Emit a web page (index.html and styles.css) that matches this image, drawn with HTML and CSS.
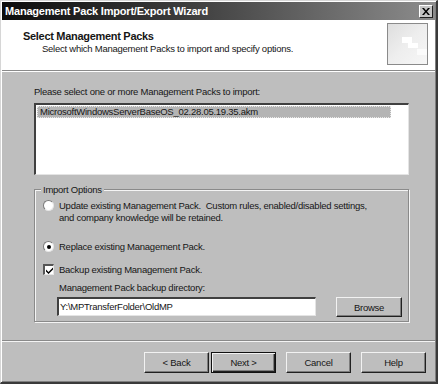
FILE: index.html
```html
<!DOCTYPE html>
<html lang="en">
<head>
  <meta charset="UTF-8">
  <title>Management Pack Import/Export Wizard</title>
  <link rel="stylesheet" href="styles.css">
</head>
<body>
  <div class="dialog">
    <div class="titlebar">
      <span class="title">Management Pack Import/Export Wizard</span>
      <span class="close">
        <svg width="8" height="7" viewBox="0 0 8 7"><path d="M0 0h2l2 2.5L6 0h2L5 3.5 8 7H6L4 4.5 2 7H0l3-3.5z" fill="#000"/></svg>
      </span>
    </div>

    <div class="banner">
      <div class="banner-text">
        <div class="banner-title">Select Management Packs</div>
        <div class="banner-sub">Select which Management Packs to import and specify options.</div>
      </div>
      <div class="banner-icon">
        <span class="tile t1"></span>
        <span class="tile t2"></span>
        <span class="tile t3"></span>
      </div>
    </div>

    <div class="content">
      <div class="prompt">Please select one or more Management Packs to import:</div>
      <div class="listbox">
        <div class="item selected">MicrosoftWindowsServerBaseOS_02.28.05.19.35.akm</div>
      </div>

      <fieldset class="group">
        <legend>Import Options</legend>
        <div class="option">
          <span class="radio"></span>
          <span>Update existing Management Pack.&nbsp; Custom rules, enabled/disabled settings,<br>and company knowledge will be retained.</span>
        </div>
        <div class="option spaced">
          <span class="radio checked"></span>
          <span>Replace existing Management Pack.</span>
        </div>
        <div class="option">
          <span class="check">
            <svg width="7" height="7" viewBox="0 0 7 7"><path d="M0 2.5l2.5 2.5L7 0.5V2.5L2.5 7 0 4.5z" fill="#000"/></svg>
          </span>
          <span>Backup existing Management Pack.</span>
        </div>
        <div class="dir-label">Management Pack backup directory:</div>
        <div class="dir-row">
          <div class="textbox">Y:\MPTransferFolder\OldMP</div>
          <button class="btn browse">Browse</button>
        </div>
      </fieldset>
    </div>

    <div class="footer">
      <button class="btn">&lt; Back</button>
      <button class="btn default">Next &gt;</button>
      <button class="btn gap">Cancel</button>
      <button class="btn gap">Help</button>
    </div>
  </div>
</body>
</html>
```

FILE: styles.css
```css
body {
  margin: 0;
  padding: 0;
  background: #bebebe;
  font-family: "Liberation Sans", Arial, sans-serif;
  font-size: 9.5px;
  letter-spacing: -0.25px;
  color: #161616;
}

.dialog {
  width: 438px;
  height: 384px;
  box-sizing: border-box;
  background: #bebebe;
  border-top: 1px solid #d6d6d6;
  border-left: 1px solid #d6d6d6;
  border-right: 2px solid #3a3a3a;
  border-bottom: 2px solid #3a3a3a;
  box-shadow: inset 1px 1px 0 #fff, inset -1px -1px 0 #808080;
  display: flex;
  flex-direction: column;
  padding: 1px 1px 0 1px;
}

.titlebar {
  height: 18px;
  display: flex;
  align-items: center;
  justify-content: space-between;
  padding: 0 2px 0 3px;
  background: linear-gradient(to right, #0c0c0c 0%, #3a3a3a 40%, #8c8c8c 100%);
}

.title {
  color: #fff;
  font-weight: bold;
  font-size: 11px;
  letter-spacing: -0.2px;
}

.close {
  width: 14px;
  height: 13px;
  box-sizing: border-box;
  background: #c4c4c4;
  border-top: 1px solid #fff;
  border-left: 1px solid #fff;
  border-right: 1px solid #202020;
  border-bottom: 1px solid #202020;
  display: flex;
  align-items: center;
  justify-content: center;
}

.banner {
  height: 47px;
  background: #fff;
  display: flex;
  justify-content: space-between;
  padding: 3px 7px 0 21px;
  border-bottom: 1px solid #8a8a8a;
  box-shadow: 0 1px 0 #fff;
}

.banner-title {
  font-weight: bold;
  font-size: 11px;
  letter-spacing: -0.3px;
  margin-top: 7px;
}

.banner-sub {
  margin-top: 1px;
  padding-left: 19px;
}

.banner-icon {
  width: 41px;
  height: 42px;
  box-sizing: border-box;
  border: 1px solid #8a8a8a;
  background: linear-gradient(135deg, #dedede 0%, #eeeeee 50%, #f6f6f6 100%);
  position: relative;
}

.tile {
  position: absolute;
  background: #fff;
}

.t1 { left: 14px; top: 13px; width: 10px; height: 6px; }
.t2 { left: 20px; top: 19px; width: 10px; height: 5px; }
.t3 { left: 29px; top: 25px; width: 10px; height: 6px; background: #fbfbfb; }

.content {
  padding: 14px 26px 0 32px;
}

.prompt {
  height: 13px;
  line-height: 13px;
}

.listbox {
  margin-top: 5px;
  height: 72px;
  box-sizing: border-box;
  background: #fff;
  border-top: 2px solid #404040;
  border-left: 2px solid #404040;
  border-right: 1px solid #e4e4e4;
  border-bottom: 1px solid #e4e4e4;
  padding: 1px 17px 0 1px;
}

.item {
  height: 12px;
  line-height: 12px;
  padding-left: 3px;
}

.selected {
  background: #b4b4b4;
  outline: 1px dotted #e8e8e8;
  outline-offset: -1px;
}

.group {
  margin: 9px 0 0 0;
  padding: 5px 0 8px 8px;
  height: 138px;
  box-sizing: border-box;
  border: 1px solid #8a8a8a;
  box-shadow: 1px 1px 0 #f4f4f4, inset 1px 1px 0 #f4f4f4;
}

.group legend {
  padding: 0 2px;
  margin-left: -2px;
  background: #bebebe;
}

.option {
  display: flex;
  align-items: flex-start;
  gap: 5px;
  line-height: 12px;
  margin-bottom: 11px;
}

.option.spaced {
  margin-top: 17px;
}

.radio {
  width: 11px;
  height: 11px;
  flex-shrink: 0;
  box-sizing: border-box;
  border-radius: 50%;
  background: #fff;
  border: 1px solid #7a7a7a;
  border-right-color: #e6e6e6;
  border-bottom-color: #e6e6e6;
  display: flex;
  align-items: center;
  justify-content: center;
}

.radio.checked::after {
  content: "";
  width: 4px;
  height: 4px;
  border-radius: 50%;
  background: #000;
}

.check {
  width: 11px;
  height: 11px;
  flex-shrink: 0;
  box-sizing: border-box;
  background: #fff;
  border-top: 2px solid #555;
  border-left: 2px solid #555;
  border-right: 1px solid #e6e6e6;
  border-bottom: 1px solid #e6e6e6;
  display: flex;
  align-items: center;
  justify-content: center;
}

.dir-label {
  margin: -5px 0 0 16px;
  line-height: 12px;
}

.dir-row {
  display: flex;
  align-items: flex-start;
  margin: 3px 0 0 14px;
}

.textbox {
  width: 259px;
  height: 19px;
  box-sizing: border-box;
  background: #fff;
  border-top: 2px solid #404040;
  border-left: 2px solid #404040;
  border-right: 1px solid #e4e4e4;
  border-bottom: 1px solid #e4e4e4;
  padding-left: 1px;
  line-height: 15px;
}

.btn {
  font-family: "Liberation Sans", Arial, sans-serif;
  font-size: 9.5px;
  letter-spacing: -0.25px;
  color: #161616;
  height: 21px;
  width: 65px;
  padding: 0;
  background: #bebebe;
  border-top: 1px solid #f2f2f2;
  border-left: 1px solid #f2f2f2;
  border-right: 1px solid #202020;
  border-bottom: 1px solid #202020;
  box-shadow: inset -1px -1px 0 #7c7c7c;
}

.browse {
  margin-left: 20px;
  width: 66px;
  height: 20px;
}

.footer {
  margin-top: auto;
  border-top: 1px solid #8a8a8a;
  box-shadow: inset 0 1px 0 #f4f4f4;
  height: 42px;
  box-sizing: border-box;
  display: flex;
  justify-content: flex-end;
  align-items: flex-start;
  padding: 11px 9px 0 0;
  gap: 2px;
}

.btn.default {
  border: 1px solid #111;
  box-shadow: inset 1px 1px 0 #f2f2f2, inset -1px -1px 0 #202020, inset -2px -2px 0 #7c7c7c;
}

.btn.gap {
  margin-left: 8px;
}
```
